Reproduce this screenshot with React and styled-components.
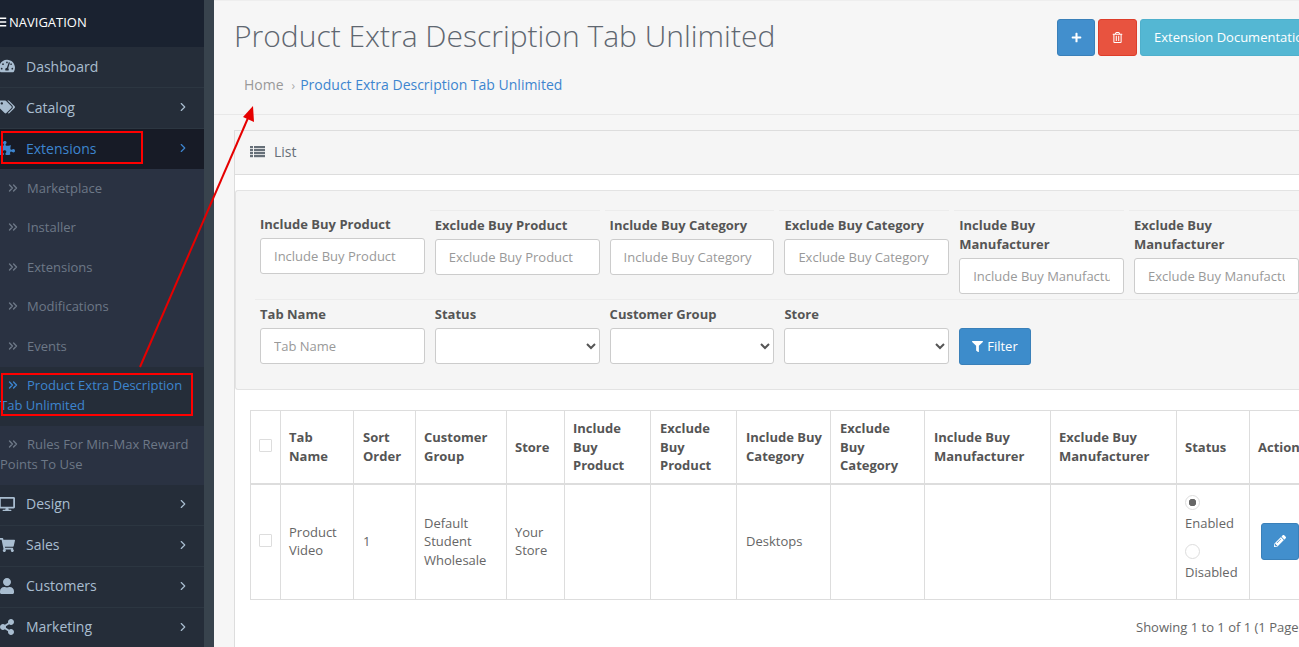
import React from 'react';
import styled, { createGlobalStyle } from 'styled-components';
import {
  FaBars, FaTachometerAlt, FaTags, FaPuzzlePiece, FaDesktop, FaShoppingCart, FaUser, FaShareAlt,
  FaPlus, FaRegTrashAlt, FaFilter, FaPencilAlt,
} from 'react-icons/fa';
import { ChevronRight, ChevronsRight } from 'lucide-react';

const GlobalStyle = createGlobalStyle`
  html, body {
    margin: 0;
    height: 647px;
    overflow: hidden;
    background: #fff;
    font-family: "Open Sans", sans-serif;
    font-size: 13px;
    color: #666;
  }
  * { box-sizing: border-box; }
`;

const Page = styled.div`
  display: flex;
  width: 1363px;
  height: 647px;
  overflow: hidden;
  position: relative;
`;

const Sidebar = styled.aside`
  flex: none;
  width: 214px;
  height: 647px;
  overflow: hidden;
  background: #252d39;
  border-right: 10px solid #38434d;
`;

const NavHead = styled.div`
  display: flex;
  align-items: center;
  gap: 2px;
  height: 47px;
  padding-bottom: 4px;
  background: #1a2230;
  color: #fff;
  font-size: 13px;
  svg { margin-left: -5px; font-size: 12px; }
`;

const NavItem = styled.div`
  display: flex;
  align-items: center;
  height: ${p => (p.$active ? 40 : 41)}px;
  padding-bottom: 2px;
  border-bottom: ${p => (p.$active ? '0' : '1px solid #2c3641')};
  font-size: 14px;
  color: ${p => (p.$active ? '#3d85cf' : '#a9bdd0')};
  background: ${p => (p.$active ? '#171b26' : 'transparent')};
`;

const NavIcon = styled.span`
  flex: none;
  display: flex;
  width: 26px;
  font-size: 16px;
  svg { margin-left: -1px; }
`;

const NavLabel = styled.span`
  flex: 1;
`;

const NavArrow = styled.span`
  display: flex;
  margin-right: 14px;
`;

const SubMenu = styled.div`
  background: #2a3242;
`;

const SubItem = styled.div`
  font-size: 13px;
  line-height: 19.5px;
  padding: 9.5px 10px 10.5px 0;
  color: ${p => (p.$active ? '#3d85cf' : '#6d7887')};
  background: ${p => (p.$active ? '#252d39' : 'transparent')};
  svg {
    margin: 0 7.5px 0 5.5px;
    vertical-align: -2px;
  }
`;

const Main = styled.main`
  flex: none;
  width: 1149px;
  background: #f6f6f6;
`;

const PageHeader = styled.header`
  height: 115px;
  padding: 0 38px 0 20px;
  border-top: 1px solid #eee;
  border-bottom: 1px solid #e8e8e8;
`;

const TitleRow = styled.div`
  display: flex;
  justify-content: space-between;
  align-items: flex-start;
`;

const Title = styled.h1`
  margin: 14px 0 0;
  font-size: 30px;
  line-height: 42px;
  font-weight: 300;
  color: #5f6770;
`;

const Actions = styled.div`
  display: flex;
  gap: 3px;
  margin-top: 18px;
`;

const Button = styled.button`
  display: inline-flex;
  align-items: center;
  justify-content: center;
  gap: 4px;
  height: 37px;
  padding: 0 ${p => p.$pad || 13}px 1px;
  font-family: inherit;
  font-size: 13px;
  color: #fff;
  border-radius: 3px;
  border: 1px solid ${p => p.$border};
  background: ${p => p.$bg};
`;

const Crumbs = styled.nav`
  margin: 18px 0 0 10px;
  font-size: 14px;
  line-height: 20px;
  color: #999;
`;

const CrumbSep = styled.span`
  margin: 0 5px 0 8px;
  font-size: 12px;
  color: #aaa;
`;

const CrumbLink = styled.span`
  color: #3d85cf;
`;

const Panel = styled.section`
  margin: 15px 20px 0;
  height: 560px;
  background: #fff;
  border: 1px solid #ddd;
`;

const PanelHead = styled.div`
  display: flex;
  align-items: center;
  gap: 9px;
  height: 44px;
  padding: 0 0 2px 15px;
  font-size: 14px;
  color: #666f78;
  background: #f5f5f5;
  border-bottom: 1px solid #ddd;
`;

const Well = styled.div`
  margin-top: 15px;
  height: 200px;
  padding: 19px 14px 0;
  background: #f5f5f5;
  border: 1px solid #e3e3e3;
  border-right: 0;
  border-radius: 3px 0 0 3px;
`;

const FormRow = styled.div`
  display: grid;
  grid-template-columns: repeat(6, 174.8px);
  align-items: start;
  height: 89px;
`;

const LinedRow = styled.div`
  display: grid;
  grid-template-columns: 169.8px repeat(5, 174.8px);
  align-items: start;
  margin-left: 5px;
  border-top: 1px solid #ececec;
`;

const Field = styled.div`
  padding: 5px 0 0 ${p => p.$pad}px;
  margin-left: ${p => p.$lead || 0}px;
  border-top: ${p => (p.$flat ? '0' : '1px solid #ececec')};
`;

const Label = styled.label`
  display: block;
  margin-bottom: 4.5px;
  font-size: 13px;
  line-height: 18.5px;
  font-weight: 700;
  color: #555;
`;

const Input = styled.input`
  display: block;
  width: 164.8px;
  height: 36px;
  padding: 0 13px;
  font-family: inherit;
  font-size: 13px;
  color: #555;
  background: #fff;
  border: 1px solid #ccc;
  border-radius: 3px;
  &::placeholder { color: #999; opacity: 1; }
`;

const Select = styled.select`
  display: block;
  width: 164.8px;
  height: 36px;
  font-family: inherit;
  font-size: 13px;
  color: #555;
  background: #fff;
  border: 1px solid #ccc;
  border-radius: 3px;
`;

const FilterCell = styled.div`
  padding: 28px 0 0 10px;
`;

const TableWrap = styled.div`
  padding: 20px 15px 0;
`;

const Grid = styled.table`
  width: 1070px;
  table-layout: fixed;
  border-collapse: collapse;
  font-size: 13px;
  line-height: 18.57px;
  th, td {
    border: 1px solid #ddd;
    padding: 8px;
    text-align: left;
    vertical-align: middle;
  }
  th:nth-child(3), td:nth-child(3),
  th:nth-child(7), th:nth-child(8), td:nth-child(8),
  th:nth-child(9), th:nth-child(10) {
    padding-left: 9px;
  }
  th {
    height: 72px;
    font-weight: 700;
    color: #555;
    border-bottom: 2px solid #ddd;
  }
  td {
    height: 116px;
    padding-bottom: 9px;
    color: #666;
  }
`;

const StatusCell = styled.td`
  && { padding-bottom: 16px; }
`;

const ActionCell = styled.td`
  && { padding: 0 0 0 11px; }
`;

const Check = styled.span`
  display: block;
  width: 13px;
  height: 13px;
  margin-bottom: 2px;
  background: #fff;
  border: 1px solid #ddd;
  border-radius: 1px;
`;

const Radio = styled.span`
  display: block;
  width: 15px;
  height: 15px;
  margin: 1px 0 4px;
  border-radius: 50%;
  background: ${p => (p.$on ? 'radial-gradient(circle, #666 0 3.5px, #fff 4px)' : '#fff')};
  border: 1px solid #ddd;
`;

const RadioLabel = styled.div`
  margin-bottom: 12px;
  &:last-child { margin-bottom: 0; }
`;

const Pager = styled.div`
  margin-top: 17px;
  margin-left: 886px;
  white-space: nowrap;
  line-height: 20px;
`;

const Overlay = styled.svg`
  position: absolute;
  left: 0;
  top: 0;
  pointer-events: none;
`;

const ListIcon = () => (
  <svg width="15" height="12" viewBox="0 0 15 12" fill="currentColor">
    {[0, 3, 6, 9].map(y => (
      <g key={y}>
        <rect x="0" y={y} width="3" height="2.2" />
        <rect x="4" y={y} width="11" height="2.2" />
      </g>
    ))}
  </svg>
);

const menuTop = [
  { label: 'Dashboard', icon: <FaTachometerAlt /> },
  { label: 'Catalog', icon: <FaTags /> },
  { label: 'Extensions', icon: <FaPuzzlePiece />, active: true },
];

const subMenu = [
  { label: 'Marketplace' },
  { label: 'Installer' },
  { label: 'Extensions' },
  { label: 'Modifications' },
  { label: 'Events' },
  { label: 'Product Extra Description Tab Unlimited', active: true },
  { label: 'Rules For Min-Max Reward Points To Use' },
];

const menuBottom = [
  { label: 'Design', icon: <FaDesktop /> },
  { label: 'Sales', icon: <FaShoppingCart /> },
  { label: 'Customers', icon: <FaUser /> },
  { label: 'Marketing', icon: <FaShareAlt /> },
];

const firstRow = [
  'Include Buy Product', 'Exclude Buy Product', 'Include Buy Category',
  'Exclude Buy Category', 'Include Buy Manufacturer', 'Exclude Buy Manufacturer',
];

const columns = [30, 73, 62, 91, 58, 86, 86, 94, 94, 126, 126, 73, 71];

const heads = [
  'Tab Name', 'Sort Order', 'Customer Group', 'Store', 'Include Buy Product', 'Exclude Buy Product',
  'Include Buy Category', 'Exclude Buy Category', 'Include Buy Manufacturer', 'Exclude Buy Manufacturer',
  'Status', 'Action',
];

function MenuLink({ item }) {
  return (
    <NavItem $active={item.active}>
      <NavIcon>{item.icon}</NavIcon>
      <NavLabel>{item.label}</NavLabel>
      {item.label !== 'Dashboard' && <NavArrow><ChevronRight size={14} strokeWidth={2} /></NavArrow>}
    </NavItem>
  );
}

export default function App() {
  return (
    <Page>
      <GlobalStyle />
      <Sidebar>
        <NavHead><FaBars />NAVIGATION</NavHead>
        {menuTop.map(item => <MenuLink key={item.label} item={item} />)}
        <SubMenu>
          {subMenu.map(item => (
            <SubItem key={item.label} $active={item.active}>
              <ChevronsRight size={14} strokeWidth={2.4} />{item.label}
            </SubItem>
          ))}
        </SubMenu>
        {menuBottom.map(item => <MenuLink key={item.label} item={item} />)}
      </Sidebar>
      <Main>
        <PageHeader>
          <TitleRow>
            <Title>Product Extra Description Tab Unlimited</Title>
            <Actions>
              <Button $bg="#428fcd" $border="#3a80b9" $pad={12.5}><FaPlus size={11} /></Button>
              <Button $bg="#e8533f" $border="#dd3d2a"><FaRegTrashAlt size={11} /></Button>
              <Button $bg="#54b7d3" $border="#4fb0cc">Extension Documentation</Button>
            </Actions>
          </TitleRow>
          <Crumbs>
            Home<CrumbSep>›</CrumbSep><CrumbLink>Product Extra Description Tab Unlimited</CrumbLink>
          </Crumbs>
        </PageHeader>
        <Panel>
          <PanelHead><ListIcon />List</PanelHead>
          <Well>
            <FormRow>
              {firstRow.map((name, i) => (
                <Field key={name} $flat={i === 0} $pad={i === 0 ? 10 : 5} $lead={i === 0 ? 0 : 5}>
                  <Label>{name}</Label>
                  <Input placeholder={name} />
                </Field>
              ))}
            </FormRow>
            <LinedRow>
              <Field $flat $pad={5}>
                <Label>Tab Name</Label>
                <Input placeholder="Tab Name" />
              </Field>
              {['Status', 'Customer Group', 'Store'].map(name => (
                <Field key={name} $flat $pad={10}>
                  <Label>{name}</Label>
                  <Select />
                </Field>
              ))}
              <FilterCell>
                <Button $bg="#3d8ccb" $border="#3a80b9" $pad={12}><FaFilter size={11} />Filter</Button>
              </FilterCell>
            </LinedRow>
          </Well>
          <TableWrap>
            <Grid>
              <colgroup>
                {columns.map((w, i) => <col key={i} width={w} />)}
              </colgroup>
              <thead>
                <tr>
                  <th><Check /></th>
                  {heads.map(h => <th key={h}>{h}</th>)}
                </tr>
              </thead>
              <tbody>
                <tr>
                  <td><Check /></td>
                  <td>Product Video</td>
                  <td>1</td>
                  <td>Default<br />Student<br />Wholesale</td>
                  <td>Your Store</td>
                  <td />
                  <td />
                  <td>Desktops</td>
                  <td />
                  <td />
                  <td />
                  <StatusCell>
                    <RadioLabel><Radio $on />Enabled</RadioLabel>
                    <RadioLabel><Radio />Disabled</RadioLabel>
                  </StatusCell>
                  <ActionCell>
                    <Button $bg="#428fcd" $border="#3a80b9" $pad={12}><FaPencilAlt size={12} /></Button>
                  </ActionCell>
                </tr>
              </tbody>
            </Grid>
            <Pager>Showing 1 to 1 of 1 (1 Pages)</Pager>
          </TableWrap>
        </Panel>
      </Main>
      <Overlay width="300" height="647" viewBox="0 0 300 647">
        <rect x="2" y="132" width="140" height="31" fill="none" stroke="#f00" strokeWidth="2" />
        <rect x="2" y="374" width="190" height="41" fill="none" stroke="#f00" strokeWidth="2" />
        <line x1="140" y1="367" x2="248" y2="118" stroke="#e60000" strokeWidth="2" />
        <polygon points="253,106 254,122 243,117" fill="#e60000" />
      </Overlay>
    </Page>
  );
}
